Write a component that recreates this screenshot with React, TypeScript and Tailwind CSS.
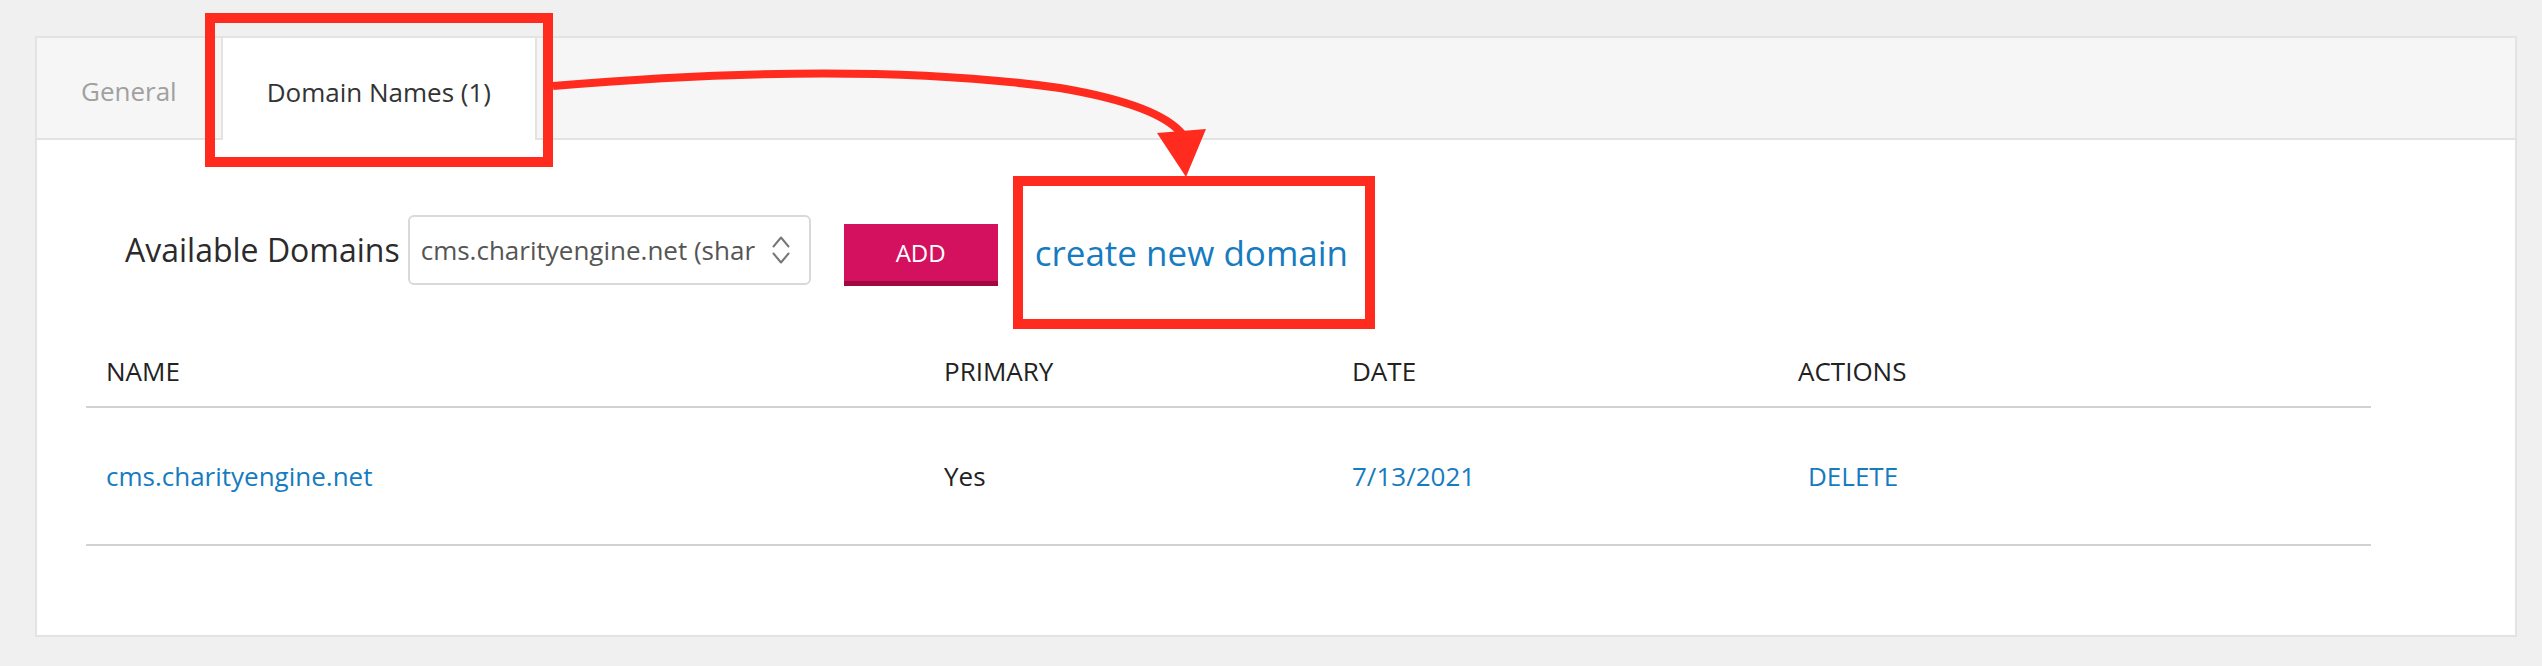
import React from 'react';

const FONT = { fontFamily: '"Open Sans", "Liberation Sans", sans-serif' };

function SelectChevrons() {
  return (
    <svg width="18" height="28" viewBox="0 0 18 28" fill="none" className="shrink-0">
      <path d="M1.5 10.5 L9 1.5 L16.5 10.5" stroke="#777" strokeWidth="2" strokeLinecap="round" strokeLinejoin="round" />
      <path d="M1.5 17.5 L9 26.5 L16.5 17.5" stroke="#777" strokeWidth="2" strokeLinecap="round" strokeLinejoin="round" />
    </svg>
  );
}

// red annotation marks drawn over the screenshot
function Annotations() {
  return (
    <svg
      className="absolute inset-0 pointer-events-none"
      width="2542"
      height="666"
      viewBox="0 0 2542 666"
      fill="none"
    >
      <rect x="210" y="18" width="338" height="144" stroke="#ff2b1f" strokeWidth="10" />
      <rect x="1018" y="181" width="352" height="143" stroke="#ff2b1f" strokeWidth="10" />
      <path
        d="M553 86 Q860 60 1060 88 Q1160 105 1183 135"
        stroke="#ff2b1f"
        strokeWidth="8"
        fill="none"
      />
      <polygon points="1157,133 1206,129 1186,177" fill="#ff2b1f" />
    </svg>
  );
}

export default function App() {
  return (
    <div className="relative w-[2542px] h-[666px] bg-[#f0f0f0] overflow-hidden pt-[36px]" style={FONT}>
      <div className="ml-[35px] w-[2482px] border-2 border-[#e3e3e3] bg-white">
        {/* Tabs */}
        <div className="flex h-[102px] bg-[#f6f6f6] border-b-2 border-[#e3e3e3]">
          <div className="h-[100px] px-[44px] flex items-center pt-[6px] border-r-2 border-[#e3e3e3] text-[26px] text-[#a0a0a0]">
            General
          </div>
          <div className="h-[102px] -mb-[2px] px-[44px] flex items-center pt-[6px] bg-white border-r-2 border-[#e3e3e3] text-[26px] text-[#333]">
            Domain Names (1)
          </div>
        </div>

        {/* Content */}
        <div className="pt-[75px] pb-[89px] pl-[49px]">
          <div className="flex items-center h-[70px] pl-[39px]">
            <span className="text-[32px] text-[#2b2b2b] mr-[8px]">Available Domains</span>
            <div className="w-[403px] h-[70px] border-2 border-[#d9d9d9] rounded-[6px] flex items-center pl-[11px] pr-[19px]">
              <span className="w-[335px] overflow-hidden whitespace-nowrap text-[26px] text-[#555]">
                cms.charityengine.net (shared)
              </span>
              <span className="ml-auto">
                <SelectChevrons />
              </span>
            </div>
            <button className="self-start mt-[9px] ml-[33px] w-[154px] h-[62px] bg-[#d3115f] border-b-[5px] border-[#a0083f] text-white text-[24px] flex items-center justify-center">
              ADD
            </button>
            <a className="ml-[37px] mt-[6px] text-[35px] text-[#167bbf]">create new domain</a>
          </div>

          {/* Table */}
          <div className="mt-[51px] w-[2285px] text-[26px]">
            <div className="grid grid-cols-[838px_408px_446px_1fr] h-[72px] border-b-2 border-[#d2d2d2] text-[#222]">
              <div className="px-[20px] flex items-center">NAME</div>
              <div className="px-[20px] flex items-center">PRIMARY</div>
              <div className="px-[20px] flex items-center">DATE</div>
              <div className="px-[20px] flex items-center">ACTIONS</div>
            </div>
            <div className="grid grid-cols-[838px_408px_446px_1fr] h-[138px] border-b-2 border-[#d2d2d2]">
              <div className="px-[20px] flex items-center text-[#167bbf]">cms.charityengine.net</div>
              <div className="px-[20px] flex items-center text-[#222]">Yes</div>
              <div className="px-[20px] flex items-center text-[#167bbf]">7/13/2021</div>
              <div className="pl-[30px] flex items-center text-[#167bbf]">DELETE</div>
            </div>
          </div>
        </div>
      </div>
      <Annotations />
    </div>
  );
}
